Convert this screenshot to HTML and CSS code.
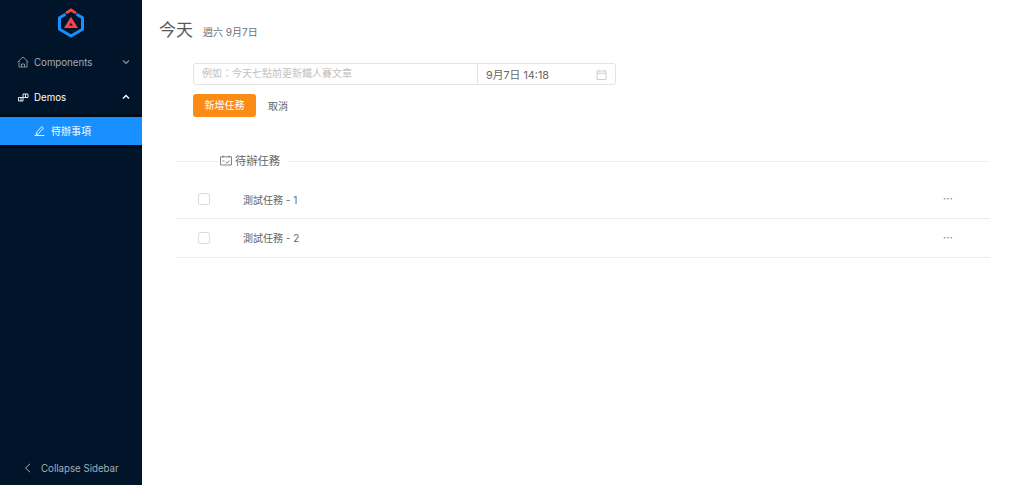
FILE: index.html
```html
<!DOCTYPE html>
<html lang="zh-Hant">
<head>
<meta charset="utf-8">
<title>今天</title>
<link rel="stylesheet" href="styles.css">
</head>
<body>
<div class="app">
  <aside class="sidebar">
    <div class="logo">
      <svg width="28" height="30" viewBox="0 0 28 30" fill="none">
        <path d="M8.500 6.200 2.500 9.700v11.600L14 28l11.500-6.700V9.700l-6-3.500" stroke="#1890ff" stroke-width="3" stroke-linejoin="round"/>
        <path d="M9.800 4.600 14 2l4.200 2.600" stroke="#f5424d" stroke-width="2.800" stroke-linecap="round"/>
        <path d="M14 8.800 21 20H17.200L14 14.800 10.800 20H7Z" fill="#f5424d"/>
        <path d="M10.500 17.500h7V20h-7z" fill="#f5424d"/>
      </svg>
    </div>
    <nav class="menu">
      <div class="menu-row">
        <svg class="menu-icon" width="12" height="12" viewBox="0 0 12 12" fill="none" stroke="#a6adb4" stroke-width=".8"><path d="M.6 6 6 1l5.400 5M2 5v6h8V5M4.500 11V8h3v3"/></svg>
        <span class="menu-label">Components</span>
        <svg class="chev" width="8" height="6" viewBox="0 0 8 6" fill="none" stroke="#8b949c" stroke-width="1.200"><path d="M1 1.500 4 4.500 7 1.500"/></svg>
      </div>
      <div class="menu-row open">
        <svg class="menu-icon" width="12" height="12" viewBox="0 0 12 12" fill="none" stroke="#fff" stroke-width=".9"><path d="M1.500 6.500h4.500V10H1.500zM6 6.500h5V3H6v3.500M8.500 3v3.500M4 6.500V10"/></svg>
        <span class="menu-label">Demos</span>
        <svg class="chev" width="8" height="6" viewBox="0 0 8 6" fill="none" stroke="#fff" stroke-width="1.400"><path d="M1 4.500 4 1.500 7 4.500"/></svg>
      </div>
      <div class="submenu">
        <div class="sub-item">
          <svg width="11" height="11" viewBox="0 0 11 11" fill="none" stroke="#fff" stroke-width=".9"><path d="M2.500 7.500 7.800 1.500 9.500 3 4.200 9 2 9.500ZM.5 10.500h10"/></svg>
          <span>待辦事項</span>
        </div>
      </div>
    </nav>
    <div class="collapse">
      <svg width="7" height="10" viewBox="0 0 7 10" fill="none" stroke="#a6adb4" stroke-width="1"><path d="M6 .8 1.500 5 6 9.200"/></svg>
      <span>Collapse Sidebar</span>
    </div>
  </aside>
  <main class="main">
    <header class="page-head">
      <h1>今天</h1>
      <span class="date">週六 9月7日</span>
    </header>
    <form class="task-form">
      <div class="input-row">
        <div class="task-input">例如：今天七點前更新鐵人賽文章</div>
        <div class="date-input">
          <span>9月7日 14:18</span>
          <svg width="11" height="11" viewBox="0 0 11 11" fill="none" stroke="#c4c4c4" stroke-width=".8"><path d="M1 2h9v8.500H1zM1 4.300h9M3 .8V2M8 .8V2"/></svg>
        </div>
      </div>
      <div class="form-actions">
        <div class="btn-add">新增任務</div>
        <div class="btn-cancel">取消</div>
      </div>
    </form>
    <section class="tasks">
      <div class="divider">
        <div class="divider-title">
          <svg width="12" height="11" viewBox="0 0 12 11" fill="none" stroke="#666" stroke-width=".8"><path d="M.5 1.800h11v8.200H.5zM3 .6v2M9 .6v2M2.500 6h2M5.800 7 7 8.200 9.300 5.500"/></svg>
          <span>待辦任務</span>
        </div>
      </div>
      <div class="task-row">
        <span class="check"></span>
        <span class="task-name">測試任務 - 1</span>
        <span class="more">···</span>
      </div>
      <div class="task-row">
        <span class="check"></span>
        <span class="task-name">測試任務 - 2</span>
        <span class="more">···</span>
      </div>
    </section>
  </main>
</div>
</body>
</html>
```
FILE: styles.css
```css
* { box-sizing: border-box; }
html, body { margin: 0; height: 100%; }
body {
  font-family: Inter, "Noto Sans CJK TC", sans-serif;
  background: #fff;
  color: #666;
  overflow: hidden;
}
.app { display: flex; height: 485px; }
.sidebar {
  width: 142px;
  flex: none;
  background: #001529;
  display: flex;
  flex-direction: column;
  color: #a6adb4;
  font-size: 9.700px;
}
.logo { height: 45px; display: flex; justify-content: center; padding-top: 8px; }
.menu { flex: 1; }
.menu-row {
  height: 34px;
  display: flex;
  align-items: center;
  padding-left: 17px;
  padding-right: 12px;
}
.menu-row.open { color: #fff; height: 35px; padding-top: 1px; }
.menu-icon { flex: none; margin-right: 5px; }
.menu-label { flex: 1; }
.submenu { background: #000c17; padding: 3px 0; }
.sub-item {
  height: 28px;
  background: #1890ff;
  color: #fff;
  display: flex;
  align-items: center;
  gap: 6px;
  padding-left: 34px;
  padding-bottom: 1px;
  font-size: 10px;
}
.collapse {
  height: 34px;
  display: flex;
  align-items: center;
  gap: 10px;
  padding-left: 24px;
}
.main { flex: 1; padding: 0 34px 0 17px; min-width: 0; }
.page-head { display: flex; align-items: center; gap: 10px; height: 30px; margin-top: 15px; }
.page-head h1 { margin: 0 0 3px; font-size: 17px; font-weight: 400; color: #595959; }
.date { font-size: 10px; color: #707070; padding-top: 3px; }
.task-form { margin: 18px 0 0 34px; }
.input-row { display: flex; width: 423px; height: 22px; border: 1px solid #e4e4e4; border-radius: 3px; }
.task-input { width: 284px; border-right: 1px solid #e4e4e4; font-size: 10px; color: #bfbfbf; padding-left: 8px; line-height: 19px; }
.date-input { flex: 1; display: flex; align-items: center; justify-content: space-between; padding: 0 8px; font-size: 10.800px; color: #666; }
.form-actions { display: flex; align-items: center; margin-top: 9px; }
.btn-add { width: 63px; height: 23px; background: #fa8c16; border-radius: 3px; color: #fff; font-size: 10px; line-height: 23px; text-align: center; }
.btn-cancel { margin-left: 12px; font-size: 10px; color: #666; }
.tasks { margin: 34px 0 0 17px; }
.divider { display: flex; align-items: center; height: 20px; }
.divider::before { content: ""; width: 43px; height: 1px; background: #f0f0f0; }
.divider::after { content: ""; flex: 1; height: 1px; background: #f0f0f0; }
.divider-title { display: flex; align-items: center; gap: 3px; padding: 0 8px 2px 1px; font-size: 11.250px; color: #666; }
.task-row {
  height: 38.500px;
  display: flex;
  align-items: center;
  border-bottom: 1px solid #ececec;
  font-size: 10px;
}
.divider + .task-row { margin-top: 9.500px; }
.check { width: 12px; height: 12px; border: 1px solid #dcdcdc; border-radius: 2px; margin-left: 22px; }
.task-name { margin-left: 33px; flex: 1; }
.more { margin-right: 37px; color: #888; font-size: 12px; line-height: 1; }
```
